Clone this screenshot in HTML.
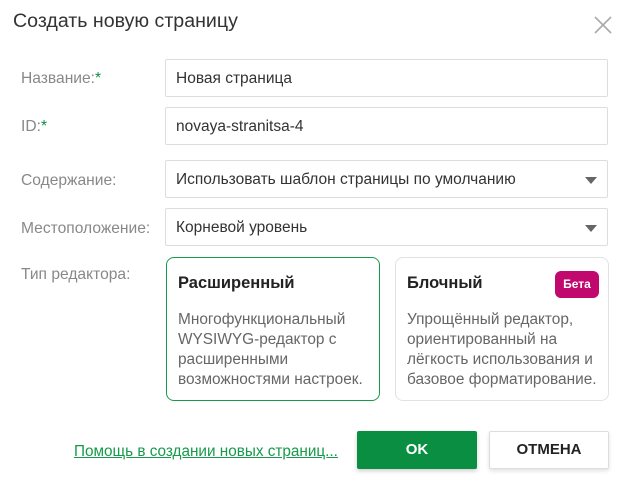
<!DOCTYPE html>
<html><head><meta charset="utf-8"><style>
*{box-sizing:border-box;margin:0;padding:0}
body{width:632px;height:493px;background:#fff;font-family:"Liberation Sans","Noto Sans CJK SC",sans-serif;position:relative;overflow:hidden;color:#222}
.a{position:absolute}
.title{left:13px;top:10px;font-size:19.6px;color:#333}
.lbl{left:21px;font-size:15.6px;color:#888}
.lbl b{color:#0a8f3e;font-weight:normal}
.inp{left:165px;width:443px;height:38px;border:1px solid #ddd;border-radius:2px;font-size:15.5px;color:#333;padding:1px 0 0 10px;line-height:36px;white-space:nowrap}
.arr{position:absolute;right:10px;top:16px;width:0;height:0;border-left:6px solid transparent;border-right:6px solid transparent;border-top:7px solid #666}
.card{top:257px;height:144px;border-radius:8px;padding:0 8px 0 11px}
.card h3{font-size:16.5px;font-weight:bold;color:#222;margin-top:16px}
.card p{font-size:15.4px;color:#666;line-height:20px;margin-top:17px;white-space:nowrap}
</style></head><body>
<div class="a title">Создать новую страницу</div>
<svg class="a" style="left:594px;top:16px" width="18" height="18" viewBox="0 0 18 18"><path d="M1 1L17 17M17 1L1 17" stroke="#aaa" stroke-width="1.6"/></svg>
<div class="a lbl" style="top:70px">Название:<b>*</b></div>
<div class="a inp" style="top:59px">Новая страница</div>
<div class="a lbl" style="top:118px">ID:<b>*</b></div>
<div class="a inp" style="top:107px">novaya-stranitsa-4</div>
<div class="a lbl" style="top:172px">Содержание:</div>
<div class="a inp" style="top:160px">Использовать шаблон страницы по умолчанию<span class="arr"></span></div>
<div class="a lbl" style="top:220px">Местоположение:</div>
<div class="a inp" style="top:208px">Корневой уровень<span class="arr"></span></div>
<div class="a lbl" style="top:266px">Тип редактора:</div>
<div class="a card" style="left:166px;width:214px;border:1px solid #169a4a"><h3>Расширенный</h3><p>Многофункциональный<br>WYSIWYG-редактор с<br>расширенными<br>возможностями настроек.</p></div>
<div class="a card" style="left:395px;width:214px;border:1px solid #e2e2e2"><h3>Блочный</h3><p>Упрощённый редактор,<br>ориентированный на<br>лёгкость использования и<br>базовое форматирование.</p>
<div class="a" style="left:159px;top:13px;width:44px;background:#c0086f;color:#fff;font-size:12px;font-weight:bold;border-radius:6px;height:27px;line-height:27px;text-align:center">Бета</div></div>
<div class="a" style="left:74px;top:443px;font-size:15.3px;color:#169a4a;text-decoration:underline">Помощь в создании новых страниц...</div>
<div class="a" style="left:357px;top:431px;width:120px;height:38px;background:#0a8f42;color:#fff;font-weight:bold;font-size:15px;text-align:center;line-height:38px;border-radius:2px;box-shadow:0 2px 4px rgba(0,0,0,.2)">OK</div>
<div class="a" style="left:489px;top:431px;width:120px;height:38px;background:#fff;border:1px solid #ddd;color:#222;font-weight:bold;font-size:15px;text-align:center;line-height:36px;border-radius:2px;box-shadow:0 2px 4px rgba(0,0,0,.12)">ОТМЕНА</div>
</body></html>
